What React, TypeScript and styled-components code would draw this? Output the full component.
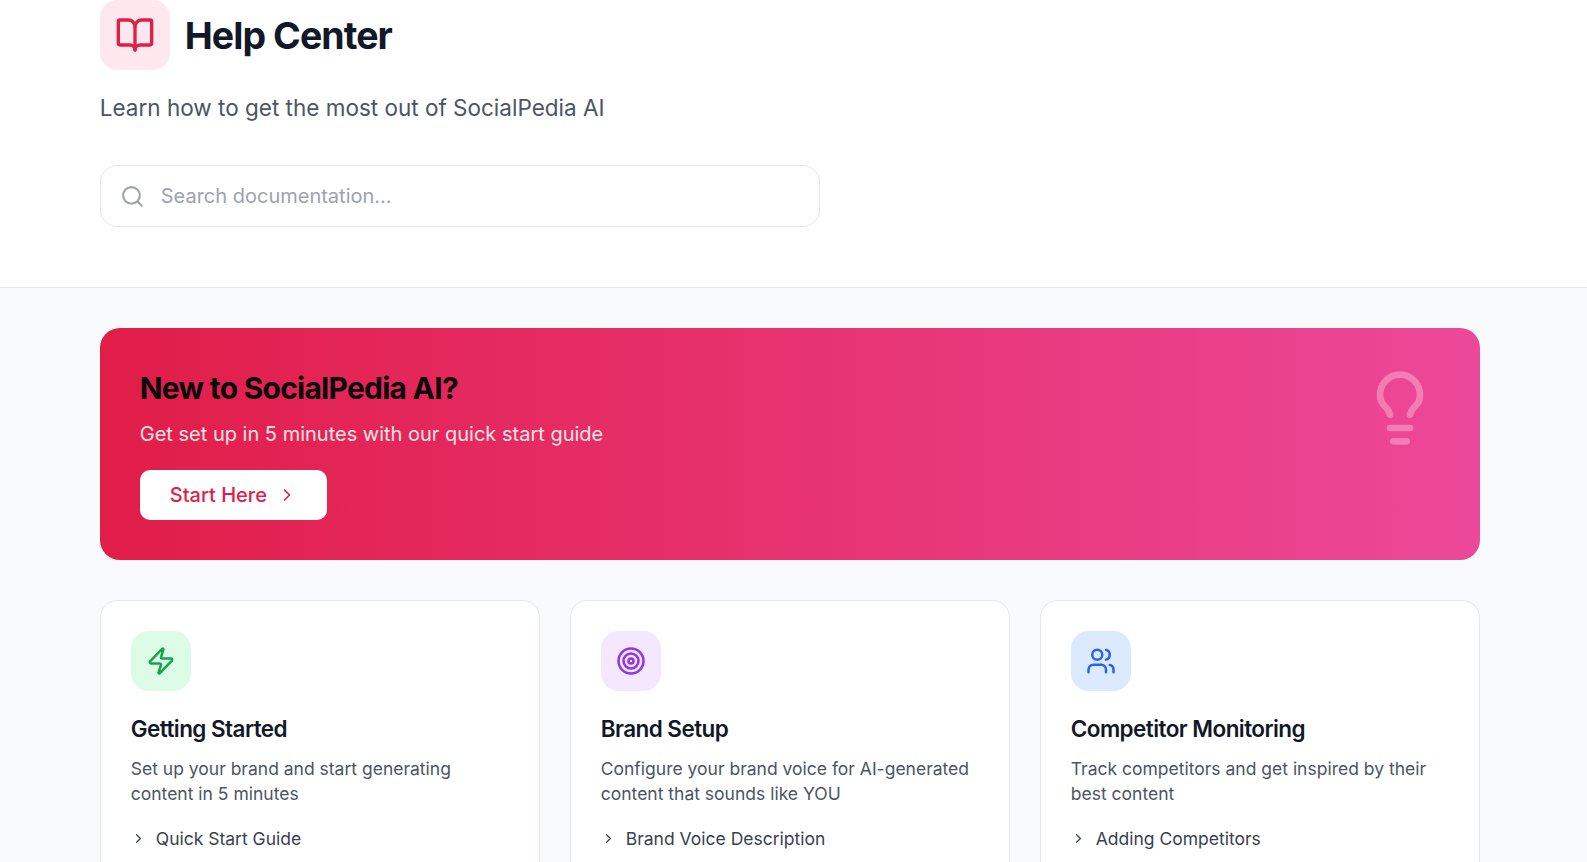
import styled, { createGlobalStyle } from 'styled-components';
import {
  BookOpen,
  ChevronRight,
  Lightbulb,
  LucideIcon,
  Search,
  Target,
  Users,
  Zap
} from 'lucide-react';

const GlobalStyle = createGlobalStyle`
  * {
    box-sizing: border-box;
  }

  body {
    margin: 0;
    height: 100vh;
    overflow: hidden;
    background: #f9fafb;
    color: #0a0a0a;
    font-family: Inter, sans-serif;
  }

  h1, h2, h3, p, ul {
    margin: 0;
    padding: 0;
  }

  svg {
    display: block;
    flex-shrink: 0;
  }
`;

const Page = styled.div`
  height: 100vh;
  overflow: hidden;
  background: #f9fafb;
`;

const Container = styled.div`
  width: 1380px;
  margin-left: 99.75px;
`;

const Header = styled.header`
  height: 288px;
  background: #fff;
  border-bottom: 1px solid #e5e7eb;
`;

const Brand = styled.div`
  display: flex;
  align-items: center;
  gap: 15px;
`;

const BrandIcon = styled.div`
  padding: 15px;
  border-radius: 17.5px;
  background: #fce8ed;
  color: #e11d48;
`;

const Title = styled.h1`
  font-size: 37.5px;
  line-height: 45px;
  font-weight: 700;
  letter-spacing: -0.025em;
  color: #111827;
`;

const Subtitle = styled.p`
  margin-top: 20px;
  font-size: 22.5px;
  line-height: 35px;
  color: #4b5563;
`;

const SearchBox = styled.label`
  display: flex;
  align-items: center;
  gap: 16px;
  width: 720px;
  height: 62px;
  margin-top: 40px;
  padding: 0 19px;
  border: 1px solid #e5e7eb;
  border-radius: 17.5px;
  color: #9ca3af;
`;

const SearchInput = styled.input`
  flex: 1;
  border: none;
  outline: none;
  padding: 0;
  background: transparent;
  font-family: inherit;
  font-size: 20px;

  &::placeholder {
    color: #9ca3af;
  }
`;

const Banner = styled.section`
  display: flex;
  justify-content: space-between;
  align-items: flex-start;
  height: 232px;
  margin-top: 40px;
  padding: 40px;
  border-radius: 20px;
  background: linear-gradient(to right, #e11d48, #ec4899);
`;

const BannerTitle = styled.h2`
  font-size: 30px;
  line-height: 40px;
  font-weight: 700;
  letter-spacing: -0.025em;
`;

const BannerText = styled.p`
  margin-top: 11px;
  font-size: 20px;
  line-height: 30px;
  color: #ffe4e6;
`;

const StartButton = styled.button`
  display: flex;
  align-items: center;
  gap: 10px;
  height: 50px;
  margin-top: 21px;
  padding: 0 30px;
  border: none;
  border-radius: 10px;
  background: #fff;
  color: #e11d48;
  font-family: inherit;
  font-size: 20px;
  font-weight: 500;
  cursor: pointer;
`;

const BannerIcon = styled.div`
  color: #fff;
  opacity: 0.3;
`;

const Grid = styled.div`
  display: grid;
  grid-template-columns: repeat(3, 1fr);
  gap: 30px;
  margin-top: 40px;
`;

const Card = styled.article`
  height: 320px;
  padding: 30px;
  border: 1px solid #e5e7eb;
  border-radius: 17.5px;
  background: #fff;
`;

const CardIcon = styled.div<{ $color: string; $background: string }>`
  display: flex;
  align-items: center;
  justify-content: center;
  width: 60px;
  height: 60px;
  border-radius: 17.5px;
  color: ${({ $color }) => $color};
  background: ${({ $background }) => $background};
`;

const CardTitle = styled.h3`
  margin-top: 20px;
  font-size: 22.5px;
  line-height: 35px;
  font-weight: 600;
  letter-spacing: -0.025em;
  color: #111827;
`;

const CardText = styled.p`
  margin-top: 10px;
  font-size: 17.5px;
  line-height: 25px;
  color: #4b5563;
`;

const LinkList = styled.ul`
  margin-top: 20px;
  list-style: none;
`;

const LinkItem = styled.li`
  display: flex;
  align-items: center;
  gap: 10px;
  font-size: 17.5px;
  line-height: 25px;
  color: #374151;
`;

interface Category {
  title: string;
  description: string;
  icon: LucideIcon;
  color: string;
  background: string;
  links: string[];
}

const categories: Category[] = [
  {
    title: 'Getting Started',
    description: 'Set up your brand and start generating content in 5 minutes',
    icon: Zap,
    color: '#16a34a',
    background: '#dcfce7',
    links: ['Quick Start Guide']
  },
  {
    title: 'Brand Setup',
    description: 'Configure your brand voice for AI-generated content that sounds like YOU',
    icon: Target,
    color: '#9333ea',
    background: '#f3e8ff',
    links: ['Brand Voice Description']
  },
  {
    title: 'Competitor Monitoring',
    description: 'Track competitors and get inspired by their best content',
    icon: Users,
    color: '#2563eb',
    background: '#dbeafe',
    links: ['Adding Competitors']
  }
];

const App = (): JSX.Element => (
  <Page>
    <GlobalStyle />
    <Header>
      <Container>
        <Brand>
          <BrandIcon>
            <BookOpen size={40} />
          </BrandIcon>
          <Title>Help Center</Title>
        </Brand>
        <Subtitle>Learn how to get the most out of SocialPedia AI</Subtitle>
        <SearchBox>
          <Search size={25} />
          <SearchInput placeholder="Search documentation..." />
        </SearchBox>
      </Container>
    </Header>

    <Container as="main">
      <Banner>
        <div>
          <BannerTitle>New to SocialPedia AI?</BannerTitle>
          <BannerText>Get set up in 5 minutes with our quick start guide</BannerText>
          <StartButton>
            Start Here
            <ChevronRight size={20} />
          </StartButton>
        </div>
        <BannerIcon>
          <Lightbulb size={80} />
        </BannerIcon>
      </Banner>

      <Grid>
        {categories.map(({ title, description, icon: Icon, color, background, links }) => (
          <Card key={title}>
            <CardIcon $color={color} $background={background}>
              <Icon size={30} />
            </CardIcon>
            <CardTitle>{title}</CardTitle>
            <CardText>{description}</CardText>
            <LinkList>
              {links.map((link) => (
                <LinkItem key={link}>
                  <ChevronRight size={15} />
                  {link}
                </LinkItem>
              ))}
            </LinkList>
          </Card>
        ))}
      </Grid>
    </Container>
  </Page>
);

export default App;
